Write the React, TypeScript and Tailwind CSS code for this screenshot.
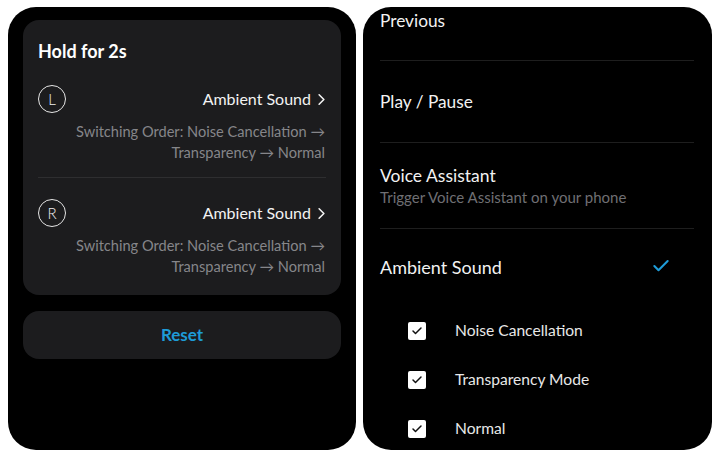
import { ChevronRight, Check } from 'lucide-react';

const font = { fontFamily: 'Lato, "Open Sans", sans-serif' };

function SideRow({ side }: { side: string }) {
  return (
    <div className="flex flex-col">
      <div className="flex items-center justify-between h-[28px]">
        <div className="w-[28px] h-[28px] rounded-full border border-[#e5e5e5] flex items-center justify-center text-[#eeeeee] text-[15px] font-light leading-none">
          {side}
        </div>
        <div className="flex items-center text-[#f2f2f2] text-[16px]">
          <span>Ambient Sound</span>
          <ChevronRight className="w-[19px] h-[19px] ml-[1px] -mr-[5px]" strokeWidth={2} />
        </div>
      </div>
      <div className="text-right text-[14.6px] leading-[21px] text-[#86868a] mt-[8px] pr-[1px]">
        Switching Order: Noise Cancellation →
        <br />
        Transparency → Normal
      </div>
    </div>
  );
}

function Box({ label }: { label: string }) {
  return (
    <div className="flex items-center h-[49px] shrink-0">
      <div className="w-[18px] h-[18px] rounded-[2px] bg-white flex items-center justify-center ml-[28px]">
        <Check className="w-[12px] h-[12px] text-[#111]" strokeWidth={3} />
      </div>
      <span className="ml-[29px] text-[15.6px] text-[#e8e8e8]">{label}</span>
    </div>
  );
}

export default function App() {
  return (
    <div className="w-[720px] h-[458px] bg-white flex gap-[7px] pl-[8px] pt-[7px]" style={font}>
      <div className="w-[348px] h-[443px] rounded-[28px] bg-black px-[15px] pt-[13px] flex flex-col">
        <div className="bg-[#1c1c1e] rounded-[16px] h-[275px] px-[15px] pt-[20px] shrink-0">
          <div className="text-white font-bold text-[18px] leading-[22px]">Hold for 2s</div>
          <div className="mt-[23px]">
            <SideRow side="L" />
          </div>
          <div className="h-px bg-[#2e2e30] mt-[14px] mb-[21px]" />
          <SideRow side="R" />
        </div>
        <div className="mt-[16px] h-[48px] shrink-0 bg-[#1c1c1e] rounded-[16px] flex items-center justify-center text-[#1e9bd7] font-bold text-[17px]">
          Reset
        </div>
      </div>

      <div className="w-[349px] h-[443px] rounded-[28px] bg-black px-[17px] overflow-hidden flex flex-col">
        <div className="h-[53px] shrink-0 pt-[4px] text-[#f2f2f2] text-[17.3px] leading-[20px]">Previous</div>
        <div className="h-px shrink-0 bg-[#1e1e1e] mr-[1px]" />
        <div className="h-[81px] shrink-0 flex items-center text-[#f2f2f2] text-[17.3px]">Play / Pause</div>
        <div className="h-px shrink-0 bg-[#1e1e1e] mr-[1px]" />
        <div className="h-[85px] shrink-0 flex flex-col justify-center">
          <div className="text-[#f2f2f2] text-[17.5px] leading-[22px]">Voice Assistant</div>
          <div className="text-[#6f6f73] text-[15px] leading-[20px]">Trigger Voice Assistant on your phone</div>
        </div>
        <div className="h-px shrink-0 bg-[#1e1e1e] mr-[1px]" />
        <div className="h-[77px] shrink-0 flex items-center justify-between">
          <span className="text-[#f2f2f2] text-[18px]">Ambient Sound</span>
          <Check className="w-[20px] h-[20px] text-[#1e9bd7] mr-[24px] -mt-[3px]" strokeWidth={2.5} />
        </div>
        <div className="flex flex-col shrink-0">
          <Box label="Noise Cancellation" />
          <Box label="Transparency Mode" />
          <Box label="Normal" />
        </div>
      </div>
    </div>
  );
}
